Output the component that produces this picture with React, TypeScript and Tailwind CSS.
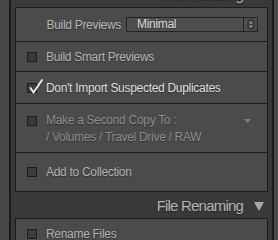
import type { ReactNode } from "react";

const shadow = "[text-shadow:0_1px_1px_rgba(0,0,0,0.35)]";

const Checkbox = ({ checked = false }: { checked?: boolean }) => (
  <div className="relative h-[10px] w-[10px] shrink-0 border border-[#1c1c1c] bg-[#3b3b3b]">
    {checked && (
      <svg
        className="absolute left-[0px] top-[-7px]"
        width="16"
        height="17"
        viewBox="0 0 16 17"
      >
        <path
          d="M2.5 11 L5.5 15.5 L14 3"
          fill="none"
          stroke="#ececec"
          strokeWidth="1.9"
          strokeLinecap="round"
          strokeLinejoin="round"
        />
      </svg>
    )}
  </div>
);

const SectionHeader = ({ title, className = "" }: { title: string; className?: string }) => (
  <div className={`flex h-[26px] shrink-0 items-center justify-end gap-[11px] pr-[4px] pt-[2px] ${className}`}>
    <span className={`text-[15px] tracking-[-0.8px] text-[#b4b4b4] ${shadow}`}>{title}</span>
    <svg width="10" height="9" viewBox="0 0 10 9">
      <path d="M0 0 L10 0 L5 9 Z" fill="#a9a9a9" />
    </svg>
  </div>
);

const CheckRow = ({
  label,
  checked,
  color,
  height,
  last,
}: {
  label: string;
  checked?: boolean;
  color: string;
  height: string;
  last?: boolean;
}) => (
  <div
    className={`flex items-center gap-[9px] pl-[11px] ${height} ${last ? "" : "border-b border-[#1c1c1c]"}`}
  >
    <Checkbox checked={checked} />
    <span className={`text-[12px] tracking-[-0.3px] ${color} ${shadow}`}>{label}</span>
  </div>
);

const Panel = ({ children, className = "" }: { children: ReactNode; className?: string }) => (
  <div className={`flex flex-col border border-[#1c1c1c] bg-[#4b4b4b] ${className}`}>{children}</div>
);

export default function App() {
  return (
    <div className="flex h-[240px] w-[278px] overflow-hidden bg-[#474747] font-['Liberation_Sans',Arial,sans-serif]">
      <div className="w-[9px] shrink-0" />
      <div className="w-[2px] shrink-0 bg-[#1c1c1c]" />

      <div className="flex w-[261px] shrink-0 flex-col bg-[#393939] px-[4px]">
        <SectionHeader title="File Handling" className="-mt-[19px]" />

        <Panel>
          {/* Build Previews */}
          <div className="flex h-[34px] items-center justify-end gap-[5px] border-b border-[#1c1c1c] pr-[9px]">
            <span className={`text-[12px] tracking-[-0.3px] text-[#b9b9b9] ${shadow}`}>Build Previews</span>
            <div className="flex h-[15px] w-[132px] items-stretch border border-[#232323] bg-[#4e4e4e]">
              <span className={`flex-1 pl-[10px] text-[12px] leading-[13px] tracking-[-0.3px] text-[#dcdcdc] ${shadow}`}>
                Minimal
              </span>
              <div className="flex w-[14px] items-center justify-center border-l border-[#232323]">
                <svg width="8" height="11" viewBox="0 0 8 11">
                  <rect x="0" y="0" width="8" height="11" rx="3.5" fill="#3c3c3c" />
                  <path d="M4 2 L6 4.5 L2 4.5 Z" fill="#9c9c9c" />
                  <path d="M4 9 L6 6.5 L2 6.5 Z" fill="#9c9c9c" />
                </svg>
              </div>
            </div>
          </div>

          <CheckRow label="Build Smart Previews" color="text-[#b4b4b4]" height="h-[30px]" />
          <CheckRow label="Don't Import Suspected Duplicates" checked color="text-[#dedede]" height="h-[32px]" />

          {/* Make a Second Copy */}
          <div className="flex h-[49px] items-start gap-[9px] border-b border-[#1c1c1c] pl-[11px] pr-[16px] pt-[8px]">
            <div className="flex h-[17px] items-center">
              <Checkbox />
            </div>
            <div className={`flex flex-1 flex-col text-[12px] leading-[17px] tracking-[-0.3px] text-[#8d8d8d] ${shadow}`}>
              <div className="flex items-center justify-between">
                <span>Make a Second Copy To :</span>
                <svg width="7" height="4" viewBox="0 0 7 4">
                  <path d="M0 0 L7 0 L3.5 4 Z" fill="#7c7c7c" />
                </svg>
              </div>
              <span>/ Volumes / Travel Drive / RAW</span>
            </div>
          </div>

          <CheckRow label="Add to Collection" color="text-[#b0b0b0]" height="h-[38px]" last />
        </Panel>

        <SectionHeader title="File Renaming" />

        <Panel className="border-b-0">
          <CheckRow label="Rename Files" color="text-[#b0b0b0]" height="h-[30px]" last />
        </Panel>
      </div>

      <div className="w-[2px] shrink-0 bg-[#1c1c1c]" />
      <div className="w-[4px] shrink-0" />
    </div>
  );
}
